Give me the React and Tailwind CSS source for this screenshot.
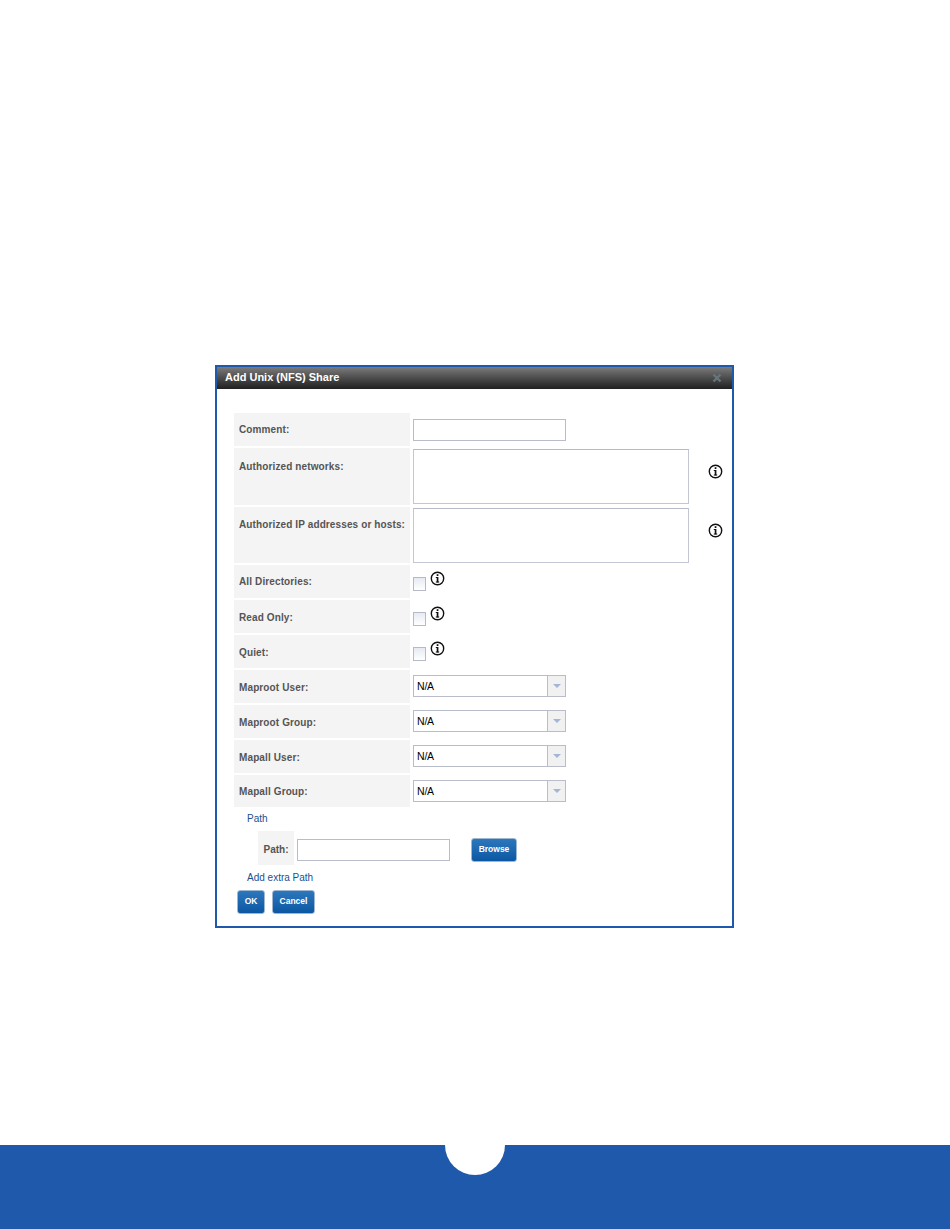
import React from "react";

function Info({ className = "" }) {
  return (
    <svg width="15" height="15" viewBox="0 0 15 15" className={"shrink-0 " + className} fill="none">
      <circle cx="7.5" cy="7.5" r="6.2" stroke="#111" strokeWidth="1.4" />
      <rect x="6.7" y="3.2" width="1.7" height="1.8" fill="#111" />
      <rect x="6.7" y="6" width="1.7" height="5.4" fill="#111" />
      <rect x="5.8" y="6" width="1.5" height="1" fill="#111" />
      <rect x="5.8" y="10.5" width="3.4" height="1" fill="#111" />
    </svg>
  );
}

function Row({ label, h = "h-[33px]", pad = "items-center", children }) {
  return (
    <div className={"flex " + h}>
      <div className={"w-[176px] shrink-0 bg-[#f4f4f4] pl-[5px] flex whitespace-nowrap text-[10px] font-bold text-[#555] tracking-[0.12px] " + pad}>
        {label}
      </div>
      <div className="pl-[3px] flex-1 flex">{children}</div>
    </div>
  );
}

function TextArea({ mt }) {
  return (
    <div className="flex flex-1">
      <div className={"w-[276px] h-[55px] bg-white border border-[#c3c7d3] border-t-[#b6bac6] " + mt} />
      <Info className="ml-[19px] mt-[16px]" />
    </div>
  );
}

function Check() {
  return (
    <div className="flex items-start">
      <div className="w-[13px] h-[14px] mt-[12px] bg-gradient-to-b from-[#e6eaf2] to-white border border-[#b6bac8]" />
      <Info className="ml-[4px] mt-[6px]" />
    </div>
  );
}

function Select() {
  return (
    <div className="flex items-center w-[153px] h-[22px] mt-[5px] bg-white border border-[#b9bdc9]">
      <div className="flex-1 pl-[3px] pt-[2px] text-[10.5px] tracking-[-0.2px] text-black">N/A</div>
      <div className="w-[18px] h-full bg-[#f1f1f1] border-l border-[#b9bdc9] flex items-center justify-center">
        <div className="w-0 h-0 border-l-[4px] border-r-[4px] border-t-[4px] border-l-transparent border-r-transparent border-t-[#a3b6d8]" />
      </div>
    </div>
  );
}

function Btn({ children, className = "" }) {
  return (
    <button className={"rounded-[3px] border border-[#9db7d3] bg-gradient-to-b from-[#2c78bb] to-[#0a57a3] text-white text-[8.5px] font-bold flex items-center justify-center pb-[2px] " + className}>
      {children}
    </button>
  );
}

export default function App() {
  return (
    <div className="w-[950px] h-[1229px] bg-white flex flex-col font-['Liberation_Sans',Arial,sans-serif]">
      <div className="flex-1 pt-[365px] pl-[215px]">
        <div className="w-[519px] h-[563px] border-2 border-[#1f59ab] bg-white flex flex-col">
          <div className="h-[22px] shrink-0 bg-gradient-to-b from-[#7c7c7c] to-[#212121] flex items-center justify-between pl-[8px] pr-[10px]">
            <span className="text-[11px] font-bold text-white -mt-[2px]">Add Unix (NFS) Share</span>
            <svg width="10" height="10" viewBox="0 0 10 10" className="-mt-[1px]"><path d="M1.5 1.5 8.5 8.5M8.5 1.5 1.5 8.5" stroke="#66757c" strokeWidth="2.4" /></svg>
          </div>
          <div className="pl-[17px] pt-[24px] flex flex-col gap-[2px]">
            <Row label="Comment:">
              <div className="w-[153px] h-[22px] mt-[6px] bg-white border border-[#b9bdc9]" />
            </Row>
            <Row label="Authorized networks:" h="h-[57px]" pad="items-start pt-[11px]"><TextArea mt="mt-px" /></Row>
            <Row label="Authorized IP addresses or hosts:" h="h-[56px]" pad="items-start pt-[10px]"><TextArea mt="mt-px" /></Row>
            <Row label="All Directories:"><Check /></Row>
            <Row label="Read Only:" pad="items-center pt-[2px]"><Check /></Row>
            <Row label="Quiet:" pad="items-center pt-[2px]"><Check /></Row>
            <Row label="Maproot User:" pad="items-center pt-[2px]"><Select /></Row>
            <Row label="Maproot Group:" pad="items-center pt-[2px]"><Select /></Row>
            <Row label="Mapall User:" pad="items-center pt-[2px]"><Select /></Row>
            <Row label="Mapall Group:" h="h-[32px]"><Select /></Row>
          </div>
          <div className="pl-[30px] mt-[6px] text-[10px] leading-[12px] text-[#1c4f8f]">Path</div>
          <div className="flex items-start ml-[41px] mt-[6px]">
            <div className="w-[36px] h-[34px] bg-[#f4f4f4] flex items-center justify-center text-[10px] font-bold text-[#555] pt-[2px]">Path:</div>
            <div className="w-[153px] h-[22px] ml-[3px] mt-[8px] bg-white border border-[#b9bdc9]" />
            <Btn className="w-[46px] h-[24px] ml-[21px] mt-[7px]">Browse</Btn>
          </div>
          <div className="pl-[30px] mt-[7px] text-[10px] leading-[12px] text-[#1c4f8f]">Add extra Path</div>
          <div className="flex pl-[20px] mt-[6px] gap-[7px]">
            <Btn className="w-[28px] h-[24px]">OK</Btn>
            <Btn className="w-[43px] h-[24px]">Cancel</Btn>
          </div>
        </div>
      </div>
      <div className="h-[84px] shrink-0 bg-[#1f59ab] flex justify-center">
        <div className="w-[60px] h-[30px] bg-white rounded-b-[30px]" />
      </div>
    </div>
  );
}
